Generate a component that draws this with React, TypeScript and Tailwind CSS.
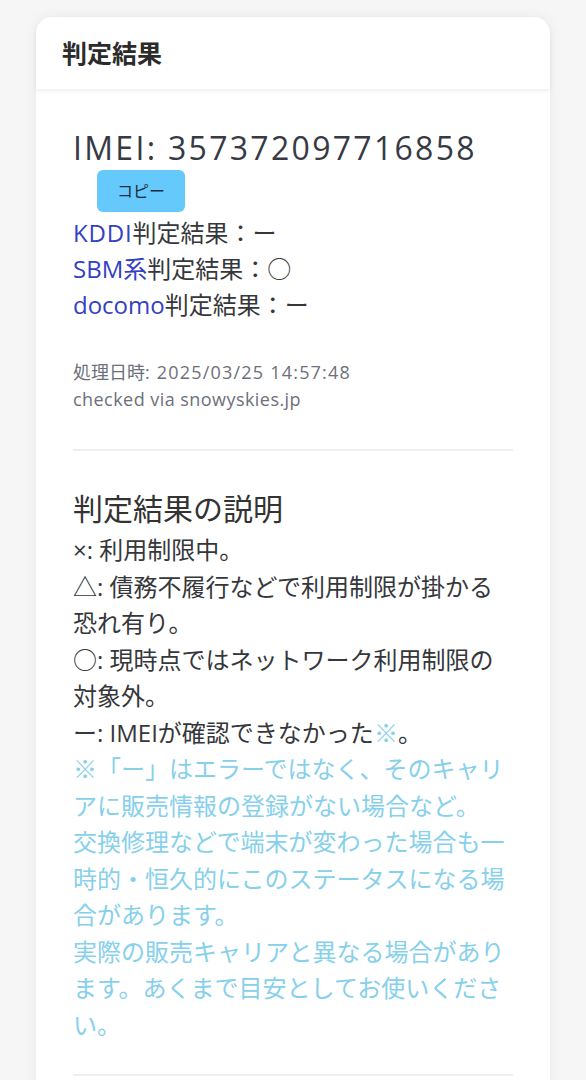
import React from "react";

const font = { fontFamily: '"Open Sans", "Noto Sans CJK JP", sans-serif' };

export default function App() {
  return (
    <div className="min-h-screen bg-[#f6f6f6] px-[36px] pt-[17px] text-[#36373b]" style={font}>
      <div className="rounded-[16px] bg-white shadow-[0_0_14px_rgba(0,0,0,0.06)]">
        <div className="flex h-[72px] items-center rounded-t-[16px] px-[26px] shadow-[0_2px_4px_rgba(0,0,0,0.07)]">
          <h2 className="text-[25px] font-semibold leading-none text-[#2b2b2b]">判定結果</h2>
        </div>
        <div className="px-[37px] pt-[40px] pb-[30px]">
          <div className="text-[32px] leading-[38px] tracking-[2.3px] text-[#373a44]">IMEI: 357372097716858</div>
          <button className="ml-[24px] mt-[3px] flex h-[42px] w-[88px] items-center justify-center rounded-[6px] bg-[#65c9fb] text-[16px] text-[#1c2a44]">
            コピー
          </button>
          <div className="mt-[3px] text-[24px] leading-[36px]">
            <div><span className="tracking-[0.8px] text-[#3441c2]">KDDI</span>判定結果：ー</div>
            <div><span className="text-[#3441c2]">SBM系</span>判定結果：○</div>
            <div><span className="text-[#3441c2]">docomo</span>判定結果：ー</div>
          </div>
          <div className="mt-[36px] text-[18px] leading-[27px] text-[#6d707a]">
            <div>処理日時<span className="tracking-[1.2px]">: 2025/03/25 14:57:48</span></div>
            <div className="tracking-[0.45px]">checked via snowyskies.jp</div>
          </div>
          <div className="mt-[36px] h-[2px] bg-[#efefef]" />
          <h3 className="mt-[38px] text-[30px] leading-[40px] text-[#333]">判定結果の説明</h3>
          <div className="mt-[3px] text-[24px] leading-[36.5px]">
            <div>×: 利用制限中。</div>
            <div>△: 債務不履行などで利用制限が掛かる恐れ有り。</div>
            <div>○: 現時点ではネットワーク利用制限の対象外。</div>
            <div>ー: IMEIが確認できなかった<span className="text-[#86d0ec]">※</span>。</div>
            <div className="text-[#86d0ec]">
              <div>※「ー」はエラーではなく、そのキャリアに販売情報の登録がない場合など。</div>
              <div>交換修理などで端末が変わった場合も一時的・恒久的にこのステータスになる場合があります。</div>
              <div>実際の販売キャリアと異なる場合があります。あくまで目安としてお使いください。</div>
            </div>
          </div>
          <div className="mt-[31px] h-[2px] bg-[#efefef]" />
          <div className="h-[40px]" />
        </div>
      </div>
    </div>
  );
}
